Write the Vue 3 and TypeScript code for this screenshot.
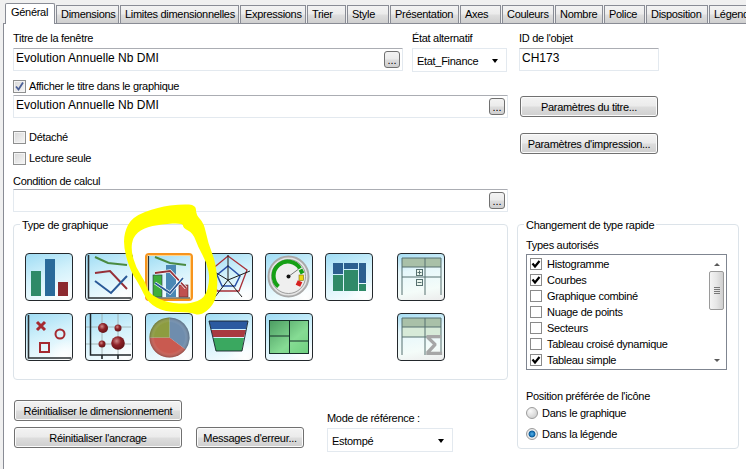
<template>
  <div class="dialog">
    <div class="tabs">
      <div
        v-for="(tab, i) in tabs"
        :key="tab.label"
        class="tab"
        :class="{ active: i === 0 }"
        :style="{ width: tab.width + 'px' }"
      >
        {{ tab.label }}
      </div>
    </div>

    <div class="panel">
      <div class="top">
        <div class="main-col">
          <div class="title-row">
            <div class="title-field">
              <div class="label">Titre de la fenêtre</div>
              <div class="input">
                <span>Evolution Annuelle Nb DMI</span>
                <button class="dots">...</button>
              </div>
            </div>
            <div class="state-field">
              <div class="label">État alternatif</div>
              <div class="select">
                <span>Etat_Finance</span>
                <i class="caret"></i>
              </div>
            </div>
          </div>

          <div class="check-row show-title">
            <span class="check grey">
              <svg width="11" height="11" viewBox="0 0 11 11"><polyline points="2,5.5 4.5,8.5 9,1.5" fill="none" stroke="#4a5f97" stroke-width="1.8" /></svg>
            </span>
            <span>Afficher le titre dans le graphique</span>
          </div>
          <div class="input second">
            <span>Evolution Annuelle Nb DMI</span>
            <button class="dots">...</button>
          </div>

          <div class="check-row detached">
            <span class="check grey"></span>
            <span>Détaché</span>
          </div>
          <div class="check-row readonly">
            <span class="check grey"></span>
            <span>Lecture seule</span>
          </div>
          <div class="label condition">Condition de calcul</div>
          <div class="input third">
            <span></span>
            <button class="dots">...</button>
          </div>
        </div>

        <div class="side-col">
          <div class="label">ID de l'objet</div>
          <div class="input object-id"><span>CH173</span></div>
          <button class="btn title-btn">Paramètres du titre...</button>
          <button class="btn print-btn">Paramètres d'impression...</button>
        </div>
      </div>

      <div class="bottom">
        <div class="main-col">
          <div class="group chart-types">
            <div class="legend">Type de graphique</div>
            <div class="tile-rows">
              <div class="tile-row">
                <div class="tile">
                  <svg viewBox="0 0 46 46">
                    <rect x="5" y="17" width="10" height="25" fill="#2f8a68" />
                    <rect x="19" y="5" width="10" height="37" fill="#2a6a9a" />
                    <rect x="32" y="28" width="10" height="14" fill="#8c2a30" />
                  </svg>
                </div>
                <div class="tile">
                  <svg viewBox="0 0 46 46">
                    <path d="M2.5 1V44H45" fill="none" stroke="#2b3033" stroke-width="1.6" />
                    <polyline points="9,3 22,9 41,11" fill="none" stroke="#4a8a40" stroke-width="2" />
                    <polyline points="9,19 24,17 41,35" fill="none" stroke="#963038" stroke-width="2" />
                    <polyline points="9,27 25,39 41,22" fill="none" stroke="#2a5a98" stroke-width="2" />
                  </svg>
                </div>
                <div class="tile selected">
                  <svg viewBox="0 0 44 44">
                    <rect x="6" y="20" width="9" height="22" fill="#3fae3c" stroke="#234" stroke-width=".6" />
                    <rect x="19" y="10" width="10" height="32" fill="#4a88b5" />
                    <rect x="32" y="30" width="9" height="12" fill="#c05050" stroke="#522" stroke-width=".6" />
                    <path d="M1.5 1V43H43" fill="none" stroke="#2b3033" stroke-width="1.2" />
                    <polyline points="8,2 23,8 39,10" fill="none" stroke="#4a8a40" stroke-width="2" />
                    <polyline points="8,18 23,16 39,33" fill="none" stroke="#fff" stroke-width="3.2" />
                    <polyline points="8,18 23,16 39,33" fill="none" stroke="#963038" stroke-width="1.8" />
                    <polyline points="8,28 23,38 36,23" fill="none" stroke="#fff" stroke-width="3.2" />
                    <polyline points="8,28 23,38 36,23" fill="none" stroke="#2a5a98" stroke-width="1.8" />
                  </svg>
                </div>
                <div class="tile">
                  <svg viewBox="0 0 46 46">
                    <polygon points="22,2 41,16 33,37 11,37 5,16" fill="none" stroke="#a83038" stroke-width="1.3" />
                    <polygon points="22,12 34,22 29,32 16,32 11,21" fill="none" stroke="#2a50a8" stroke-width="1.5" />
                    <path d="M22 1V26M22 26L44 17M22 26L36 43M22 26L9 43M22 26L2 14" stroke="#1a1a1a" stroke-width="1" fill="none" />
                  </svg>
                </div>
                <div class="tile">
                  <svg viewBox="0 0 46 46">
                    <circle cx="22.5" cy="22.5" r="20" fill="#e4e4e4" stroke="#a9a9a9" stroke-width="2" />
                    <circle cx="22.5" cy="22.5" r="17" fill="#efefef" stroke="#888" stroke-width=".8" />
                    <path d="M12.5 32.5A14.2 14.2 0 1 1 34 14.5" fill="none" stroke="#16a016" stroke-width="4" />
                    <path d="M34.5 15.5L36.5 19.5" fill="none" stroke="#16a016" stroke-width="4" />
                    <rect x="33" y="21" width="4.5" height="5.5" fill="#ecd910" stroke="#786a10" stroke-width=".6" />
                    <rect x="30.5" y="27" width="5" height="5" fill="#d62020" transform="rotate(25 33 29.5)" />
                    <line x1="22.5" y1="22.5" x2="32" y2="15.5" stroke="#777" stroke-width="1" />
                    <circle cx="22.5" cy="22.5" r="2" fill="#111" />
                  </svg>
                </div>
                <div class="tile">
                  <svg viewBox="0 0 46 46">
                    <rect x="7" y="9" width="10" height="11" fill="#2b5f8f" />
                    <rect x="7" y="21" width="10" height="16" fill="#2f8a68" />
                    <rect x="18" y="9" width="14" height="6" fill="#2b5f8f" />
                    <rect x="18" y="16" width="14" height="21" fill="#2f8a68" />
                    <rect x="33" y="9" width="7" height="20" fill="#2b5f8f" />
                    <rect x="33" y="30" width="7" height="7" fill="#2f8a68" />
                  </svg>
                </div>
                <div class="tile tile-far table-tile">
                  <svg viewBox="0 0 46 46">
                    <rect x="4" y="4" width="39" height="9" fill="#a9c0a8" />
                    <path d="M4 41V4H43V41M4 13H43M27 4V41M4 23H43" fill="none" stroke="#567070" stroke-width="1" />
                    <rect x="18.5" y="15.5" width="6" height="6" fill="#eaf6ee" stroke="#567070" />
                    <path d="M19.5 18.5h4M21.5 16.5v4" stroke="#567070" />
                    <rect x="18.5" y="25.5" width="6" height="6" fill="#eaf6ee" stroke="#567070" />
                    <path d="M19.5 28.5h4" stroke="#567070" />
                  </svg>
                </div>
              </div>
              <div class="tile-row">
                <div class="tile">
                  <svg viewBox="0 0 46 46">
                    <path d="M2.5 1V44H45" fill="none" stroke="#2b3033" stroke-width="1.6" />
                    <path d="M11 8L19 16M19 8L11 16" stroke="#a52a30" stroke-width="3" />
                    <circle cx="34" cy="20" r="4.5" fill="none" stroke="#a52a30" stroke-width="2" />
                    <rect x="14" y="29" width="9" height="9" fill="none" stroke="#a52a30" stroke-width="2" />
                  </svg>
                </div>
                <div class="tile">
                  <svg viewBox="0 0 46 46">
                    <path d="M0 13H45M0 30H45M16 0V45M32 0V45" stroke="#9aa8a8" stroke-width=".8" />
                    <path d="M4.5 0V41H45M16 41V45M32 41V45" fill="none" stroke="#20262a" stroke-width="1.5" />
                    <circle cx="17" cy="14" r="5" fill="url(#bubble)" />
                    <circle cx="32" cy="14" r="3.5" fill="url(#bubble)" />
                    <circle cx="16" cy="30" r="3.5" fill="url(#bubble)" />
                    <circle cx="32" cy="29" r="6.8" fill="url(#bubble)" />
                  </svg>
                </div>
                <div class="tile">
                  <svg viewBox="0 0 46 46">
                    <path d="M23.5 23.5L23.5 3.5A20 20 0 0 1 39.5 35.5Z" fill="#6f8dad" />
                    <path d="M23.5 23.5L39.5 35.5A20 20 0 0 1 3.5 23.5Z" fill="#c95a50" />
                    <path d="M23.5 23.5H3.5A20 20 0 0 1 23.5 3.5Z" fill="#8d9c40" />
                    <circle cx="23.5" cy="23.5" r="20" fill="url(#pieEdge)" />
                  </svg>
                </div>
                <div class="tile">
                  <svg viewBox="0 0 46 46">
                    <polygon points="3,7 42,7 40,15 5,15" fill="#2b5aa0" />
                    <polygon points="5,16 40,16 38,23 7,23" fill="#a83a40" />
                    <polygon points="7,24 38,24 36,37 10,37" fill="#3aa860" />
                    <polygon points="3,7 42,7 36,37 10,37" fill="none" stroke="#16222a" stroke-width=".9" />
                  </svg>
                </div>
                <div class="tile">
                  <svg viewBox="0 0 46 46">
                    <rect x="3.5" y="6.5" width="39" height="33" fill="url(#treemap)" stroke="#16302a" stroke-width="1" />
                    <path d="M23.5 7V39M4 22H23.5M23.5 27H42" fill="none" stroke="#16302a" stroke-width="1" />
                  </svg>
                </div>
                <div class="tile tile-empty"></div>
                <div class="tile tile-far table-tile">
                  <svg viewBox="0 0 46 46">
                    <rect x="4" y="4" width="39" height="9" fill="#a9c0a8" />
                    <rect x="4" y="13" width="39" height="10" fill="#d7ead8" />
                    <path d="M4 41V4H43V41M4 13H43M27 4V41M4 23H43" fill="none" stroke="#567070" stroke-width="1" />
                    <text x="27" y="41" class="sigma">Σ</text>
                  </svg>
                </div>
              </div>
            </div>
          </div>

          <div class="actions">
            <div class="action-stack">
              <button class="btn reset-btn">Réinitialiser le dimensionnement</button>
              <button class="btn reset-btn anchor-btn">Réinitialiser l'ancrage</button>
            </div>
            <button class="btn errors-btn">Messages d'erreur...</button>
            <div class="ref-mode">
              <div class="label">Mode de référence :</div>
              <div class="select ref-select">
                <span>Estompé</span>
                <i class="caret"></i>
              </div>
            </div>
          </div>
        </div>

        <div class="group quick-change">
          <div class="legend">Changement de type rapide</div>
          <div class="label">Types autorisés</div>
          <div class="listbox">
            <div class="list-items">
              <div v-for="item in chartTypes" :key="item.label" class="list-item">
                <span class="check flat">
                  <svg v-if="item.on" width="10" height="10" viewBox="0 0 10 10"><polyline points="1.5,4.5 4,7.5 8.5,2" fill="none" stroke="#000" stroke-width="2.2" /></svg>
                </span>
                <span>{{ item.label }}</span>
              </div>
            </div>
            <div class="scrollbar">
              <i class="arrow up"></i>
              <div class="thumb">
                <i></i><i></i><i></i><i></i>
              </div>
              <i class="arrow down"></i>
            </div>
          </div>
          <div class="label icon-pos">Position préférée de l'icône</div>
          <div class="radio-row first">
            <span class="radio"></span>
            <span>Dans le graphique</span>
          </div>
          <div class="radio-row second-radio">
            <span class="radio on"></span>
            <span>Dans la légende</span>
          </div>
        </div>
      </div>
    </div>

    <!-- trait jaune dessine par-dessus la capture -->
    <svg class="scribble" width="746" height="469" viewBox="0 0 746 469">
      <path :d="scribblePath" fill="#ffff00" fill-rule="evenodd" />
    </svg>

    <svg width="0" height="0" class="defs">
      <defs>
        <radialGradient id="bubble" cx="40%" cy="35%" r="70%">
          <stop offset="0" stop-color="#d08a8a" />
          <stop offset=".45" stop-color="#8e2228" />
          <stop offset="1" stop-color="#5c1216" />
        </radialGradient>
        <radialGradient id="pieEdge" cx="50%" cy="50%" r="50%">
          <stop offset=".75" stop-color="#fff" stop-opacity="0" />
          <stop offset="1" stop-color="#333" stop-opacity=".35" />
        </radialGradient>
        <linearGradient id="treemap" x1="0" y1="0" x2="1" y2="1">
          <stop offset="0" stop-color="#4b9c62" />
          <stop offset=".6" stop-color="#86dc94" />
          <stop offset="1" stop-color="#6fd07f" />
        </linearGradient>
      </defs>
    </svg>
  </div>
</template>

<script setup lang="ts">
interface Tab {
  label: string
  width: number
}

const tabs: Tab[] = [
  { label: 'Général', width: 50 },
  { label: 'Dimensions', width: 63 },
  { label: 'Limites dimensionnelles', width: 119 },
  { label: 'Expressions', width: 66 },
  { label: 'Trier', width: 39 },
  { label: 'Style', width: 42 },
  { label: 'Présentation', width: 69 },
  { label: 'Axes', width: 41 },
  { label: 'Couleurs', width: 52 },
  { label: 'Nombre', width: 48 },
  { label: 'Police', width: 41 },
  { label: 'Disposition', width: 62 },
  { label: 'Légende', width: 60 }
]

const chartTypes = [
  { label: 'Histogramme', on: true },
  { label: 'Courbes', on: true },
  { label: 'Graphique combiné', on: false },
  { label: 'Nuage de points', on: false },
  { label: 'Secteurs', on: false },
  { label: 'Tableau croisé dynamique', on: false },
  { label: 'Tableau simple', on: true }
]

type Pt = [number, number]

// contour exterieur et interieur du trait
const outer: Pt[] = [
  [196, 205], [196, 215], [204, 223], [208, 243], [216, 263], [218, 290], [213, 306], [200, 316],
  [190, 312], [165, 312], [148, 303], [139, 284], [131, 272], [124, 250], [124, 233], [132, 217],
  [158, 207], [182, 204]
]
const inner: Pt[] = [
  [183, 223], [183, 228], [193, 233], [198, 247], [207, 263], [210, 280], [205, 298], [190, 304],
  [168, 303], [149, 294], [145, 281], [136, 268], [131, 250], [133, 237], [143, 228], [162, 224]
]

const smooth = (pts: Pt[]) => {
  const mid = (a: Pt, b: Pt) => `${(a[0] + b[0]) / 2} ${(a[1] + b[1]) / 2}`
  let d = `M${mid(pts[pts.length - 1], pts[0])}`
  pts.forEach((p, i) => {
    d += `Q${p[0]} ${p[1]} ${mid(p, pts[(i + 1) % pts.length])}`
  })
  return d + 'Z'
}

const scribblePath = smooth(outer) + smooth(inner)
</script>

<style>
html,
body {
  margin: 0;
  background: #f0f0f0;
  overflow: hidden;
}
</style>

<style scoped>
.dialog {
  position: relative;
  width: 746px;
  height: 469px;
  overflow: hidden;
  padding-left: 3px;
  box-sizing: border-box;
  font-family: 'Liberation Sans', Arial, sans-serif;
  font-size: 11px;
  letter-spacing: -0.3px;
  color: #000;
}

.tabs {
  display: flex;
  height: 24px;
  padding: 5px 0 0 2px;
  box-sizing: border-box;
  border-bottom: 1px solid #898c95;
  margin-right: -60px;
  position: relative;
  z-index: 1;
}
.tab {
  flex: none;
  box-sizing: border-box;
  height: 18px;
  margin-right: 1px;
  padding-left: 4px;
  line-height: 17px;
  white-space: nowrap;
  border: 1px solid #898c95;
  border-bottom: 0;
  background: linear-gradient(#f3f3f3, #ebebeb 48%, #dedede 52%, #cfcfcf);
}
.tab.active {
  height: 21px;
  margin-top: -2px;
  padding-left: 5px;
  line-height: 17px;
  background: #fff;
  border-radius: 2px 2px 0 0;
}

.panel {
  height: 445px;
  margin-right: -1px;
  padding-left: 9px;
  border-left: 1px solid #898c95;
  background: #fff;
}

.top {
  display: flex;
  height: 188px;
  position: relative;
}
.main-col {
  flex: none;
  width: 495px;
}
.side-col {
  margin-left: 11px;
  padding-top: 7px;
}

.label {
  height: 14px;
  line-height: 14px;
  white-space: nowrap;
}
.title-row {
  display: flex;
  height: 47px;
  padding-top: 7px;
  box-sizing: border-box;
}
.title-field {
  width: 390px;
}
.state-field {
  width: 95px;
  margin-left: 9px;
}
.input {
  display: flex;
  justify-content: space-between;
  box-sizing: border-box;
  height: 23px;
  margin-top: 3px;
  padding: 2px 2px 0 2px;
  font-size: 12px;
  letter-spacing: 0;
  line-height: 15px;
  border: 1px solid #e3e9ef;
  border-top-color: #abadb3;
  border-radius: 1px;
  background: #fff;
}
.input.second {
  margin-top: 2px;
}
.input.third {
  margin-top: 1px;
}
.object-id {
  width: 140px;
}
.dots {
  flex: none;
  box-sizing: border-box;
  width: 16px;
  height: 17px;
  padding: 0;
  font: 11px 'Liberation Sans', Arial, sans-serif;
  line-height: 17px;
  border: 1px solid #707070;
  border-radius: 3px;
  background: linear-gradient(#f3f3f3, #ebebeb 48%, #dddddd 52%, #cfcfcf);
}

.select {
  display: flex;
  align-items: center;
  justify-content: space-between;
  box-sizing: border-box;
  height: 24px;
  margin-top: 3px;
  padding: 1px 8px 0 4px;
  border: 1px solid #e3e9ef;
  background: #fff;
}
.caret {
  width: 0;
  height: 0;
  border: 3.5px solid transparent;
  border-top: 4px solid #000;
  border-bottom: 0;
}

.check-row {
  display: flex;
  align-items: center;
  height: 14px;
  gap: 3px;
}
.show-title {
  margin-top: 8px;
}
.detached {
  margin-top: 12px;
}
.readonly {
  margin-top: 7px;
}
.condition {
  margin-top: 9px;
}

.check {
  display: flex;
  align-items: center;
  justify-content: center;
  flex: none;
  box-sizing: border-box;
  width: 13px;
  height: 13px;
  border: 1px solid #8e8f8f;
}
.check.grey {
  background: linear-gradient(135deg, #d8d8d8, #f6f6f6);
  box-shadow: inset 0 0 0 1px #f4f4f4;
}
.check.flat {
  width: 12px;
  height: 12px;
  border-color: #8a8a8a;
  background: #fff;
}

.btn {
  display: block;
  box-sizing: border-box;
  padding: 0;
  font: 11px 'Liberation Sans', Arial, sans-serif;
  letter-spacing: -0.3px;
  color: #000;
  white-space: nowrap;
  border: 1px solid #707070;
  border-radius: 3px;
  background: linear-gradient(#f3f3f3, #ebebeb 48%, #dddddd 52%, #cfcfcf);
  box-shadow: inset 0 0 0 1px #fbfbfb;
}
.title-btn,
.print-btn {
  width: 138px;
  height: 21px;
  margin-left: 1px;
}
.title-btn {
  margin-top: 25px;
}
.print-btn {
  margin-top: 16px;
}

.bottom {
  display: flex;
  margin-top: 12px;
}
.group {
  position: relative;
  box-sizing: border-box;
  border: 1px solid #dce3e9;
  border-radius: 4px;
}
.legend {
  position: absolute;
  top: -6px;
  padding: 0 2px;
  line-height: 13px;
  white-space: nowrap;
  background: #fff;
}
.chart-types {
  width: 495px;
  height: 156px;
  padding: 28px 0 0 11px;
}
.chart-types .legend {
  left: 6px;
}
.tile-rows {
  display: flex;
  flex-direction: column;
  gap: 12px;
}
.tile-row {
  display: flex;
  gap: 12px;
}
.tile {
  flex: none;
  box-sizing: border-box;
  width: 48px;
  height: 48px;
  border: 1px solid #23282c;
  border-radius: 4px;
  background:
    radial-gradient(circle at 85% 95%, #fff 0, rgba(255, 255, 255, 0) 30%),
    linear-gradient(160deg, #9fdcf4, #d2f1fb 45%, #f2fbfe 85%, #e8e8e8);
}
.tile svg {
  display: block;
  width: 46px;
  height: 46px;
  filter: blur(0.3px);
}
.tile.selected {
  border: 2px solid #f7941d;
  outline: 1px solid #ffd48a;
  outline-offset: -3px;
}
.tile.selected svg {
  width: 44px;
  height: 44px;
}
.tile-far {
  margin-left: 12px;
}
.tile-empty {
  visibility: hidden;
}
.table-tile {
  background: linear-gradient(170deg, #a6ddf3, #e6f7fb 35%, #f4fcf9 75%, #ececec);
}
.sigma {
  font-family: 'Liberation Sans', Arial, sans-serif;
  font-size: 30px;
  font-weight: bold;
  fill: #a6a6a6;
}

.actions {
  display: flex;
  align-items: flex-end;
  margin-top: 20px;
  padding-left: 1px;
}
.action-stack {
  width: 168px;
  margin-bottom: 4px;
}
.reset-btn {
  width: 168px;
  height: 21px;
}
.anchor-btn {
  margin-top: 6px;
}
.errors-btn {
  width: 108px;
  height: 21px;
  margin: 0 0 4px 14px;
}
.ref-mode {
  margin-left: 23px;
}
.ref-select {
  width: 126px;
}

.quick-change {
  width: 222px;
  height: 225px;
  margin-left: 9px;
  padding: 13px 0 0 8px;
}
.quick-change .legend {
  left: 6px;
}
.listbox {
  display: flex;
  box-sizing: border-box;
  width: 201px;
  height: 116px;
  margin-top: 2px;
  border: 1px solid #7f8590;
  padding: 1px;
}
.list-items {
  flex: 1;
}
.list-item {
  display: flex;
  align-items: center;
  gap: 5px;
  height: 16px;
  padding-left: 2px;
}
.scrollbar {
  display: flex;
  flex-direction: column;
  align-items: center;
  justify-content: space-between;
  width: 15px;
  margin-right: 1px;
  padding-top: 7px;
  padding-bottom: 6px;
  box-sizing: border-box;
}
.arrow {
  width: 0;
  height: 0;
  border: 3px solid transparent;
}
.arrow.up {
  border-top: 0;
  border-bottom: 3px solid #5a5a5a;
}
.arrow.down {
  border-bottom: 0;
  border-top: 3px solid #5a5a5a;
}
.thumb {
  display: flex;
  flex-direction: column;
  align-items: center;
  justify-content: center;
  gap: 1px;
  box-sizing: border-box;
  width: 15px;
  height: 39px;
  margin-top: -8px;
  margin-bottom: 36px;
  border: 1px solid #9a9a9a;
  border-radius: 2px;
  background: linear-gradient(90deg, #f4f4f4, #e6e6e6 50%, #cfcfcf);
}
.thumb i {
  width: 6px;
  height: 1px;
  background: #777;
}
.icon-pos {
  margin-top: 19px;
}
.radio-row {
  display: flex;
  align-items: center;
  gap: 4px;
  height: 14px;
}
.radio-row.first {
  margin-top: 3px;
}
.radio-row.second-radio {
  margin-top: 7px;
}
.radio {
  flex: none;
  box-sizing: border-box;
  width: 12px;
  height: 12px;
  border: 1px solid #9c9c9c;
  border-radius: 50%;
  background: radial-gradient(circle at 35% 30%, #fafafa, #d6d6d6 70%);
}
.radio.on {
  background: radial-gradient(circle at 50% 50%, #58b4e8 0, #1a76ba 32%, #0d5a94 42%, #f0f0f0 55%, #d0d0d0 100%);
}

.scribble {
  position: absolute;
  left: 0;
  top: 0;
  pointer-events: none;
  z-index: 2;
}
.defs {
  position: absolute;
}
</style>
